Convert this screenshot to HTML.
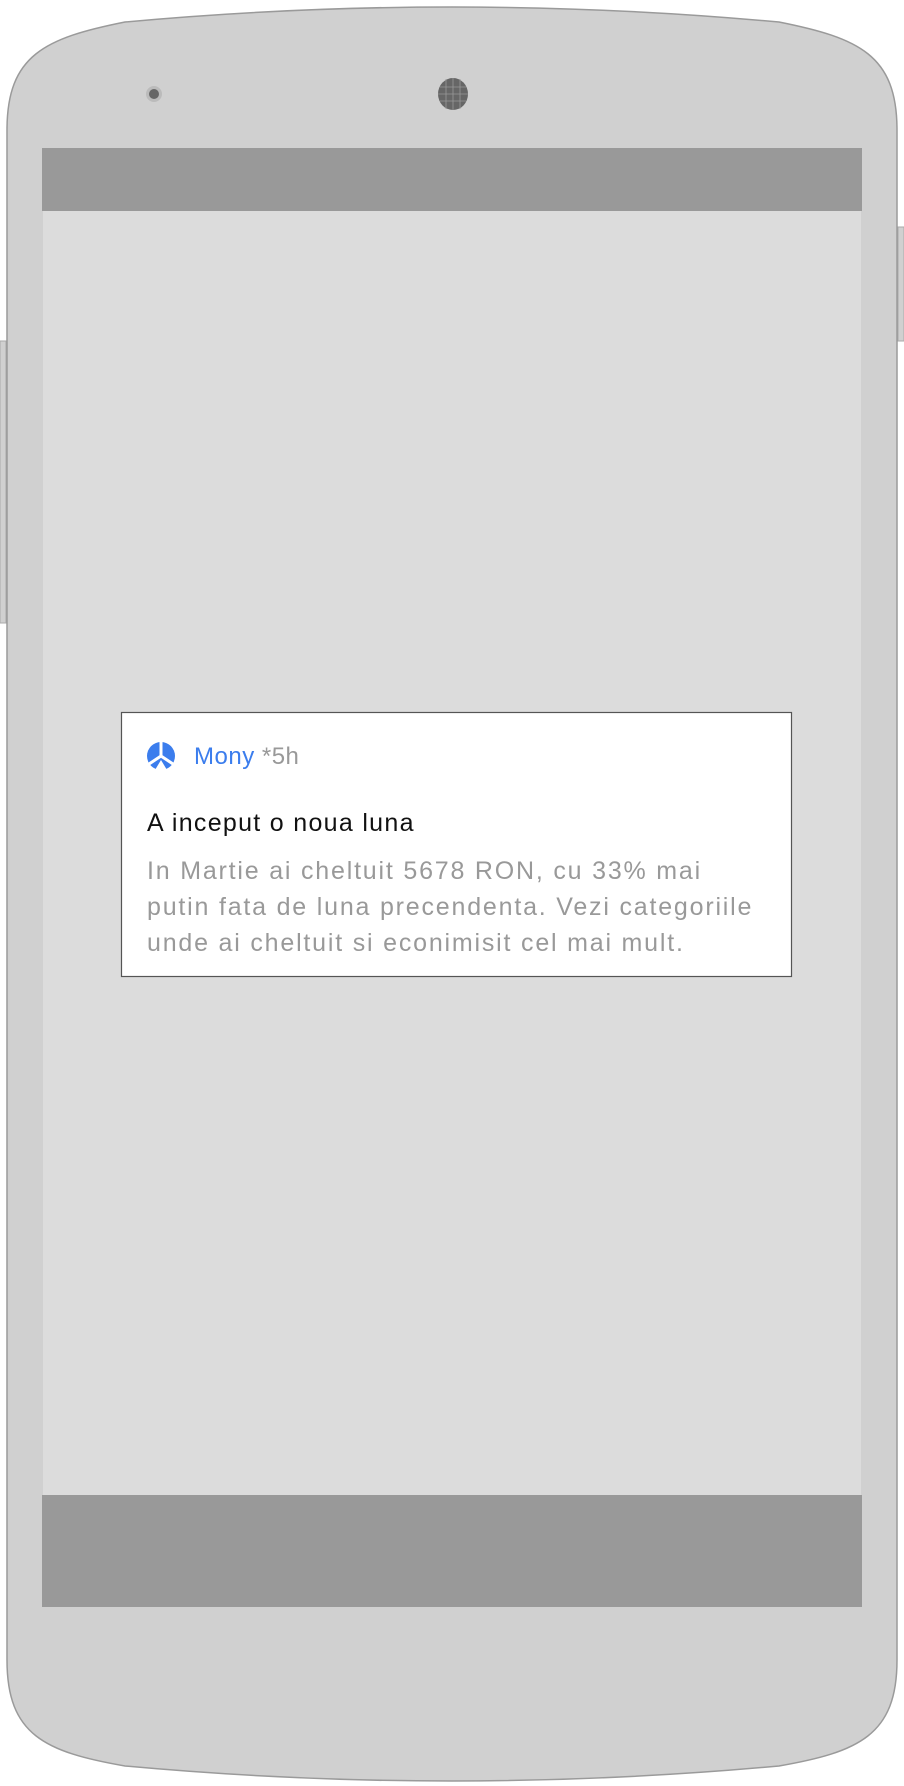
<!DOCTYPE html>
<html><head><meta charset="utf-8"><style>
html,body{margin:0;padding:0;width:904px;height:1786px;background:#fff;overflow:hidden;font-family:"Liberation Sans",sans-serif}
.abs{position:absolute}
</style></head><body>
<svg class="abs" style="left:0;top:0" width="904" height="1786" viewBox="0 0 904 1786">
<rect x="898" y="227" width="6" height="114" fill="#d0d0d0" stroke="#aaa"/>
<rect x="0" y="341" width="6" height="282" fill="#d0d0d0" stroke="#aaa"/>
<path d="M7,130 C7,55 45,38 125,22 Q452,-8 779,22 C859,38 897,55 897,130 L897,1660 C897,1735 859,1752 779,1766 Q452,1796 125,1766 C45,1752 7,1735 7,1660 Z" fill="#d0d0d0" stroke="#9a9a9a" stroke-width="1.5"/>
<circle cx="154" cy="94" r="8" fill="#bbb"/>
<circle cx="154" cy="94" r="5" fill="#666"/>
<ellipse cx="453" cy="94" rx="15" ry="16" fill="#666"/>
<g stroke="#999" stroke-width="0.8">
<line x1="440" y1="87" x2="466" y2="87"/><line x1="438" y1="94" x2="468" y2="94"/><line x1="440" y1="101" x2="466" y2="101"/>
<line x1="446" y1="79" x2="446" y2="109"/><line x1="453" y1="78" x2="453" y2="110"/><line x1="460" y1="79" x2="460" y2="109"/>
</g>
<rect x="42" y="148" width="820" height="63" fill="#999"/>
<rect x="43" y="211" width="818" height="1284" fill="#dcdcdc"/>
<rect x="42" y="1495" width="820" height="112" fill="#999"/>
<rect x="121.5" y="712.5" width="670" height="264" fill="#fff" stroke="#555" stroke-width="1.2"/>
<circle cx="161" cy="756" r="14" fill="#3b7ded"/>
<path d="M161,742 L161,756 M161,756 L149,764 M161,756 L173,764" stroke="#fff" stroke-width="3"/>
<path d="M155,770 L161,760 L167,770 Z" fill="#fff"/>
</svg>
<div class="abs" style="left:194px;top:743px;font-size:24px;letter-spacing:0.5px;color:#3b7ded">Mony <span style="color:#999">*5h</span></div>
<div class="abs" style="left:147px;top:809px;font-size:25px;letter-spacing:1.3px;color:#111;white-space:nowrap">A inceput o noua luna</div>
<div class="abs" style="left:147px;top:853px;width:660px;font-size:25px;letter-spacing:1.8px;line-height:36px;color:#999;white-space:nowrap">In Martie ai cheltuit 5678 RON, cu 33% mai<br>putin fata de luna precendenta. Vezi categoriile<br>unde ai cheltuit si econimisit cel mai mult.</div>
</body></html>
